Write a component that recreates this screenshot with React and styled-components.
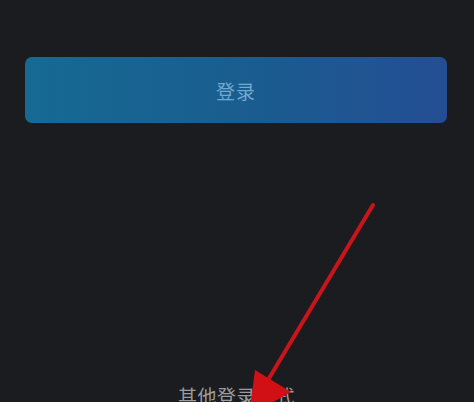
import React from "react";
import styled, { createGlobalStyle } from "styled-components";

const GlobalStyle = createGlobalStyle`
  html, body {
    margin: 0;
    padding: 0;
    background: #1b1c20;
  }
  body {
    font-family: "Noto Sans CJK SC", "Noto Sans", sans-serif;
  }
`;

const Page = styled.div`
  position: relative;
  width: 474px;
  height: 402px;
  overflow: hidden;
  background: #1b1c20;
  display: flex;
  flex-direction: column;
  align-items: center;
  padding-top: 57px;
  box-sizing: border-box;
`;

const LoginButton = styled.button`
  flex-shrink: 0;
  width: 422px;
  height: 66px;
  margin-left: -2px;
  border: none;
  border-radius: 7px;
  background: linear-gradient(90deg, #166a93 0%, #1a5c8f 55%, #244e94 100%);
  color: #72a9d0;
  font-family: inherit;
  font-size: 19px;
  letter-spacing: 1px;
  cursor: pointer;
`;

const OtherLogin = styled.div`
  flex-shrink: 0;
  margin-top: 260px;
  margin-left: -1px;
  color: #9c9c9e;
  font-size: 19px;
  letter-spacing: 0.5px;
  line-height: 26px;
`;

const Arrow = styled.svg`
  position: absolute;
  left: 0;
  top: 0;
  pointer-events: none;
`;

export default function App() {
  return (
    <>
      <GlobalStyle />
      <Page>
        <LoginButton>登录</LoginButton>
        <OtherLogin>其他登录方式</OtherLogin>
        <Arrow width="474" height="402" viewBox="0 0 474 402">
          <line
            x1="373"
            y1="205"
            x2="268"
            y2="380"
            stroke="#c9151a"
            strokeWidth="4"
            strokeLinecap="round"
          />
          <polygon points="249,416 255,370 291,392" fill="#d01015" />
        </Arrow>
      </Page>
    </>
  );
}
